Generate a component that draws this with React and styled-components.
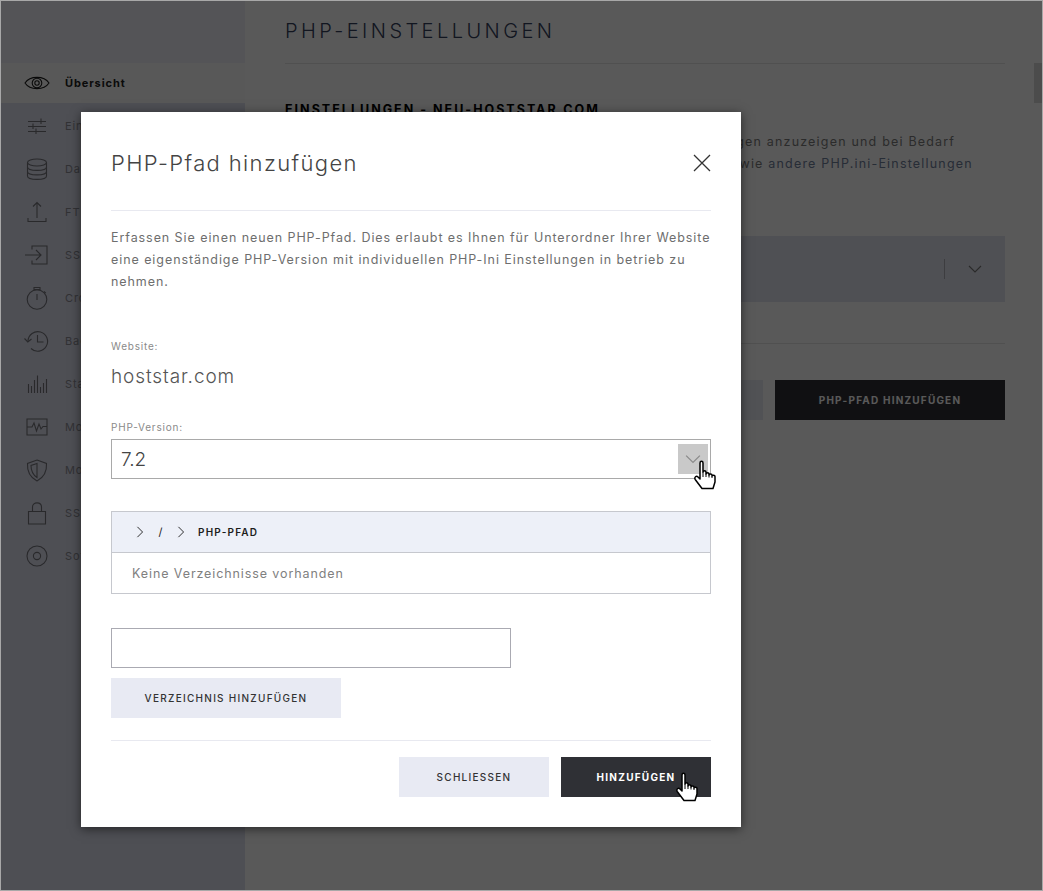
import React from 'react'
import styled, { createGlobalStyle } from 'styled-components'

const GlobalStyle = createGlobalStyle`
    html, body {
        margin: 0;
        padding: 0;
        height: 100%;
        overflow: hidden;
        background: #fff;
    }
    * {
        box-sizing: border-box;
    }
    body {
        font-family: Inter, "Open Sans", "Liberation Sans", sans-serif;
    }
`

const icons = {
    eye: <><path d="M2 12 C7 4.5 21 4.5 26 12 C21 19.5 7 19.5 2 12 Z" /><circle cx="14" cy="12" r="4.8" /><circle cx="14" cy="12" r="2.2" /></>,
    sliders: <><path d="M5 7.5 H23 M5 12.5 H23 M5 17.5 H23" /><path d="M18 4.5 V10 M10 9.5 V15 M13 14.5 V20" /></>,
    database: <><ellipse cx="14" cy="5.5" rx="9.5" ry="3.5" /><path d="M4.5 5.5 V19 C4.5 23.5 23.5 23.5 23.5 19 V5.5" /><path d="M4.5 10 C4.5 14.5 23.5 14.5 23.5 10 M4.5 14.5 C4.5 19 23.5 19 23.5 14.5" /></>,
    upload: <><path d="M14 2.5 V18 M10 6.5 L14 2.5 L18 6.5" /><path d="M5 18 V21.5 H23 V18" /></>,
    login: <><path d="M9 6.5 V3 H24 V21 H9 V17.5" /><path d="M2 12 H18 M13 7 L18 12 L13 17" /></>,
    timer: <><circle cx="14" cy="13.5" r="9.8" /><path d="M11 1.5 H17 V3.6 H11 Z" /><path d="M14 8 V14 M21 5.5 L22.8 7.2" /></>,
    history: <><path d="M5 12 A9.8 9.8 0 1 1 8 19.5" /><path d="M1.5 9.5 L4.8 13 L8.5 10" /><path d="M14.5 6 V13 H20.5" /></>,
    bars: <><path d="M5.5 21 V12 M8.5 21 V14 M11.5 21 V8 M14.5 21 V3.5 M17.5 21 V15 M20.5 21 V11 M23.5 21 V7" /></>,
    pulse: <><path d="M4 4 H24 V20 H4 Z" /><path d="M4 12 H9 L11 8 L13.5 16 L16 9 L18 14 L20 11.5 H24" /></>,
    shield: <><path d="M14 2 L23.5 5.5 C24 13 21.5 19 14 23 C6.5 19 4 13 4.5 5.5 Z" /><path d="M14 5.5 L8 7.5 C8 12.5 9.5 16.5 14 19.5 Z" /></>,
    lock: <><path d="M5.5 10.5 H22.5 V23 H5.5 Z" /><path d="M9.5 10.5 V6 C9.5 0.5 18.5 0.5 18.5 6 V10.5" /></>,
    disc: <><circle cx="14" cy="12" r="10" /><circle cx="14" cy="12" r="3.6" /></>,
}

const navItems = [
    { icon: 'eye', label: 'Übersicht', active: true },
    { icon: 'sliders', label: 'Einstellungen' },
    { icon: 'database', label: 'Datenbanken' },
    { icon: 'upload', label: 'FTP-Zugang' },
    { icon: 'login', label: 'SSH-Zugang' },
    { icon: 'timer', label: 'Cronjobs' },
    { icon: 'history', label: 'Backups' },
    { icon: 'bars', label: 'Statistiken' },
    { icon: 'pulse', label: 'Monitoring' },
    { icon: 'shield', label: 'ModSecurity' },
    { icon: 'lock', label: 'SSL-Zertifikate' },
    { icon: 'disc', label: 'Software' },
]

const Chevron = ({ down, size = 14, color = '#333' }) => (
    <svg width={size} height={size} viewBox="0 0 14 14" fill="none" stroke={color} strokeWidth="1.1">
        <path d={down ? 'M1 4 L7 10 L13 4' : 'M4 1 L10 7 L4 13'} />
    </svg>
)

const HandCursor = styled(({ className }) => (
    <svg className={className} width="24" height="30" viewBox="0 0 24 30" strokeLinejoin="round">
        <path
            fill="#fff"
            stroke="#000"
            strokeWidth="1.5"
            d="M7 3 C7 0.8 10 0.8 10 3 V12 C10 10.4 13 10.4 13 12 V14 C13 12.4 16 12.4 16 14 V15 C16 13.6 19 13.6 19 15 V16 C19 14.8 22 14.8 22 16.5 V22 L20 28.5 H9 L2.2 19.5 C0.8 17.2 3.4 15.4 5 17 L7 19 Z"
        />
        <path fill="none" stroke="#000" strokeWidth="1" d="M10 12 V17 M13 14 V17 M16 15 V17.5 M19 16 V18" />
    </svg>
))`
    position: absolute;
    left: ${p => p.$left}px;
    top: ${p => p.$top}px;
    pointer-events: none;
`

export default function App() {
    return (
        <>
            <GlobalStyle />
            <Page>
                <Sidebar>
                    <SidebarTop />
                    {navItems.map(item => (
                        <NavItem key={item.icon} $active={item.active}>
                            <NavIcon viewBox="0 0 28 24" fill="none" stroke={item.active ? '#1c1c1c' : '#75767c'} strokeWidth="1.1">
                                {icons[item.icon]}
                            </NavIcon>
                            <NavLabel $active={item.active}>{item.label}</NavLabel>
                        </NavItem>
                    ))}
                </Sidebar>

                <Main>
                    <PageHeader>
                        <PageTitle>PHP-EINSTELLUNGEN</PageTitle>
                    </PageHeader>
                    <SectionTitle>EINSTELLUNGEN - NEU-HOSTSTAR.COM</SectionTitle>
                    <Intro>
                        <IntroLine>In diesem Bereich haben Sie die Möglichkeit, die PHP-Einstellungen anzuzeigen und bei Bedarf</IntroLine>
                        <IntroLine>Änderungen zu machen. Ändern Sie hier z.B. die PHP-Version sowie <Link>andere PHP.ini-Einstellungen</Link></IntroLine>
                    </Intro>
                    <Panel>
                        <PanelDivider />
                        <PanelChevron>
                            <Chevron down color="#777" />
                        </PanelChevron>
                    </Panel>
                    <MainRule />
                    <MainActions>
                        <MainButton>PHP-EINSTELLUNGEN</MainButton>
                        <MainButton $dark>PHP-PFAD HINZUFÜGEN</MainButton>
                    </MainActions>
                </Main>

                <Scrollbar>
                    <ScrollThumb />
                </Scrollbar>

                <Overlay>
                    <Modal>
                        <ModalHeader>
                            <ModalTitle>PHP-Pfad hinzufügen</ModalTitle>
                            <CloseIcon width="20" height="20" viewBox="0 0 20 20" fill="none" stroke="#333" strokeWidth="1.3">
                                <path d="M3 2 L19 18 M19 2 L3 18" />
                            </CloseIcon>
                        </ModalHeader>

                        <Description>
                            Erfassen Sie einen neuen PHP-Pfad. Dies erlaubt es Ihnen für Unterordner Ihrer Website<br />
                            eine eigenständige PHP-Version mit individuellen PHP-Ini Einstellungen in betrieb zu<br />
                            nehmen.
                        </Description>

                        <FieldLabel $top={46}>Website:</FieldLabel>
                        <Domain>hoststar.com</Domain>

                        <FieldLabel $top={30}>PHP-Version:</FieldLabel>
                        <Select>
                            <SelectValue>7.2</SelectValue>
                            <SelectArrow>
                                <Chevron down size={16} color="#8a8a8a" />
                            </SelectArrow>
                            <HandCursor $left={581} $top={20} />
                        </Select>

                        <PathTable>
                            <PathHead>
                                <Chevron size={12} color="#222" />
                                <Slash>/</Slash>
                                <Chevron size={12} color="#222" />
                                <PathName>PHP-PFAD</PathName>
                            </PathHead>
                            <PathRow>Keine Verzeichnisse vorhanden</PathRow>
                        </PathTable>

                        <TextInput />
                        <Button $width={230} $top={10}>VERZEICHNIS HINZUFÜGEN</Button>

                        <ModalFooter>
                            <Button $width={150}>SCHLIESSEN</Button>
                            <Button $width={150} $dark>
                                HINZUFÜGEN
                                <HandCursor $left={114} $top={15} />
                            </Button>
                        </ModalFooter>
                    </Modal>
                </Overlay>
            </Page>
        </>
    )
}

const Page = styled.div`
    position: relative;
    display: flex;
    width: 100%;
    height: 100vh;
    overflow: hidden;
    background: #fff;
`

const Sidebar = styled.nav`
    width: 245px;
    flex-shrink: 0;
    background: #dfe1f0;
`

const SidebarTop = styled.div`
    height: 63px;
    background: #eff1fa;
`

const NavItem = styled.div`
    display: flex;
    align-items: center;
    height: ${p => (p.$active ? '40px' : '43px')};
    margin-bottom: ${p => (p.$active ? '1px' : '0')};
    padding-left: 23px;
    background: ${p => (p.$active ? '#fdfdfb' : 'transparent')};
`

const NavIcon = styled.svg`
    width: 28px;
    height: 24px;
    flex-shrink: 0;
`

const NavLabel = styled.span`
    margin-left: 14px;
    font-size: 11px;
    letter-spacing: 0.9px;
    font-weight: ${p => (p.$active ? 700 : 400)};
    color: ${p => (p.$active ? '#222' : '#8f9098')};
`

const Main = styled.main`
    flex: 1;
    min-width: 0;
    padding: 0 29px 0 40px;
`

const PageHeader = styled.header`
    height: 64px;
    padding-top: 18px;
    border-bottom: 1px solid #e6e6e6;
`

const PageTitle = styled.h1`
    margin: 0;
    font-size: 20px;
    line-height: 26px;
    font-weight: 300;
    letter-spacing: 3.43px;
    color: #34405c;
`

const SectionTitle = styled.h2`
    margin: 38px 0 0;
    font-size: 12.5px;
    line-height: 16px;
    font-weight: 700;
    letter-spacing: 2.01px;
    color: #000;
`

const Intro = styled.div`
    margin-top: 13px;
`

const IntroLine = styled.div`
    font-size: 12.5px;
    line-height: 22px;
    font-weight: 400;
    letter-spacing: 1.19px;
    color: #7d7d7d;
    white-space: nowrap;
`

const Link = styled.span`
    color: #71809c;
`

const Panel = styled.div`
    display: flex;
    align-items: center;
    justify-content: flex-end;
    height: 66px;
    margin-top: 61px;
    background: #e2e4f0;
`

const PanelDivider = styled.div`
    width: 1px;
    height: 20px;
    background: #aeb0b8;
`

const PanelChevron = styled.div`
    display: flex;
    justify-content: center;
    width: 60px;
`

const MainRule = styled.div`
    height: 1px;
    margin-top: 41px;
    background: #e6e6e6;
`

const MainActions = styled.div`
    display: flex;
    justify-content: flex-end;
    gap: 12px;
    margin-top: 36px;
`

const MainButton = styled.div`
    display: flex;
    align-items: center;
    justify-content: center;
    width: 230px;
    height: 40px;
    font-size: 10px;
    font-weight: 700;
    letter-spacing: 1.2px;
    background: ${p => (p.$dark ? '#2f3035' : '#e8eaf3')};
    color: ${p => (p.$dark ? '#fff' : '#333')};
`

const Scrollbar = styled.div`
    width: 9px;
    flex-shrink: 0;
    padding-top: 63px;
`

const ScrollThumb = styled.div`
    height: 40px;
    background: #d9d9d9;
`

const Overlay = styled.div`
    position: absolute;
    inset: 0;
    background: rgba(0, 0, 0, 0.65);
    border: 1px solid #a8a8a8;
`

const Modal = styled.div`
    position: absolute;
    left: 80px;
    top: 111px;
    width: 660px;
    height: 715px;
    padding: 0 30px;
    background: #fff;
    box-shadow: 0 2px 10px rgba(0, 0, 0, 0.55);
`

const ModalHeader = styled.div`
    display: flex;
    align-items: center;
    justify-content: space-between;
    height: 99px;
    padding-top: 3px;
    border-bottom: 1px solid #e8e9f0;
`

const ModalTitle = styled.h2`
    margin: 0;
    font-size: 22px;
    font-weight: 300;
    letter-spacing: 1.37px;
    color: #444;
`

const CloseIcon = styled.svg`
    flex-shrink: 0;
`

const Description = styled.p`
    margin: 16px 0 0;
    font-size: 12.5px;
    line-height: 22px;
    font-weight: 400;
    letter-spacing: 0.93px;
    color: #6e6e6e;
    white-space: nowrap;
`

const FieldLabel = styled.div`
    margin-top: ${p => p.$top}px;
    font-size: 10px;
    line-height: 14px;
    letter-spacing: 0.8px;
    color: #8a8a8a;
`

const Domain = styled.div`
    margin-top: 11px;
    font-size: 19px;
    line-height: 26px;
    font-weight: 300;
    letter-spacing: 0.9px;
    color: #555;
`

const Select = styled.div`
    position: relative;
    display: flex;
    align-items: center;
    justify-content: space-between;
    height: 40px;
    margin-top: 5px;
    padding: 0 2px 0 9px;
    border: 1px solid #a9a9a9;
`

const SelectValue = styled.span`
    font-size: 19px;
    font-weight: 300;
    color: #444;
`

const SelectArrow = styled.span`
    display: flex;
    align-items: center;
    justify-content: center;
    width: 30px;
    height: 30px;
    background: #c9c9c9;
`

const PathTable = styled.div`
    margin-top: 32px;
    border: 1px solid #c6c8ce;
`

const PathHead = styled.div`
    display: flex;
    align-items: center;
    height: 41px;
    padding-left: 22px;
    background: #edf0f8;
    border-bottom: 1px solid #c6c8ce;
`

const Slash = styled.span`
    width: 29px;
    text-align: center;
    font-size: 11px;
    color: #222;
`

const PathName = styled.span`
    margin-left: 11px;
    font-size: 10px;
    font-weight: 600;
    letter-spacing: 1.2px;
    color: #1d1d1d;
`

const PathRow = styled.div`
    display: flex;
    align-items: center;
    height: 40px;
    padding-left: 20px;
    font-size: 12.5px;
    letter-spacing: 0.9px;
    color: #808080;
`

const TextInput = styled.div`
    width: 400px;
    height: 40px;
    margin-top: 34px;
    border: 1px solid #aaaab2;
`

const Button = styled.div`
    position: relative;
    display: flex;
    align-items: center;
    justify-content: center;
    width: ${p => p.$width}px;
    height: 40px;
    margin-top: ${p => p.$top || 0}px;
    font-size: 10px;
    font-weight: ${p => (p.$dark ? 700 : 500)};
    letter-spacing: 1.27px;
    background: ${p => (p.$dark ? '#2f3035' : '#e8eaf3')};
    color: ${p => (p.$dark ? '#fff' : '#333')};
`

const ModalFooter = styled.div`
    display: flex;
    justify-content: flex-end;
    gap: 12px;
    margin-top: 22px;
    padding-top: 16px;
    border-top: 1px solid #e8e9f0;
`
